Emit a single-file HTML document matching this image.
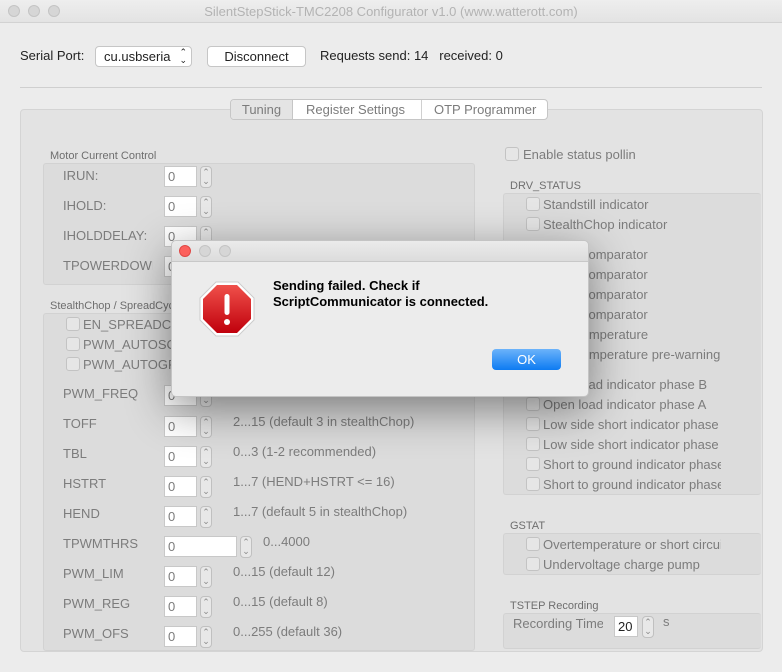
<!DOCTYPE html>
<html><head><meta charset="utf-8"><style>
*{box-sizing:border-box;margin:0;padding:0}
body{width:782px;height:672px;background:#ececec;font-family:"Liberation Sans",sans-serif;font-size:13px;color:#222;position:relative;overflow:hidden}
.a{position:absolute;white-space:nowrap}
.g{color:#7c7c7c}
.tl{position:absolute;width:12px;height:12px;border-radius:50%;background:#d6d6d6;border:1px solid #c4c4c4}
.box{position:absolute;background:#dcdcdc;border:1px solid #d2d2d2;border-radius:3px}
.inp{position:absolute;width:33px;height:21px;background:#fff;border:1px solid #c8c8c8;color:#7c7c7c;padding:2px 0 0 3px;font-size:13px}
.st{position:absolute;width:12px;height:22px;border:1px solid #c0c0c0;border-radius:4px;background:#e8e8e8;font-size:9px;color:#888;text-align:center;line-height:9px;padding-top:1px}
.cb{position:absolute;width:14px;height:14px;border:1px solid #c3c3c3;border-radius:3px;background:#e6e6e6}
.lab{position:absolute;font-size:11px;color:#6e6e6e}
</style></head><body>
<div class="a" style="left:0;top:0;width:782px;height:23px;background:linear-gradient(#eeeeee,#e3e3e3);border-bottom:1px solid #d2d2d2"></div>
<div class="tl" style="left:8px;top:5px"></div><div class="tl" style="left:28px;top:5px"></div><div class="tl" style="left:48px;top:5px"></div>
<div class="a" style="left:0;width:782px;top:4px;text-align:center;color:#b3b3b3;font-size:13px">SilentStepStick-TMC2208 Configurator v1.0 (www.watterott.com)</div>
<div class="a" style="left:20px;top:48px">Serial Port:</div>
<div class="a" style="left:95px;top:46px;width:97px;height:21px;background:#fff;border:1px solid #c6c6c6;border-radius:4px;padding:2px 0 0 8px">cu.usbseria<span style="position:absolute;right:4px;top:1px;font-size:9px;line-height:8px">⌃<br>⌄</span></div>
<div class="a" style="left:207px;top:46px;width:99px;height:21px;background:#fff;border:1px solid #c6c6c6;border-radius:4px;text-align:center;padding-top:2px">Disconnect</div>
<div class="a" style="left:320px;top:48px">Requests send: 14&nbsp;&nbsp;&nbsp;received: 0</div>
<div class="a" style="left:20px;top:87px;width:742px;height:1px;background:#cfcfcf"></div>
<div class="a" style="left:20px;top:109px;width:743px;height:543px;background:#e3e3e3;border:1px solid #d4d4d4;border-radius:4px"></div>
<div class="a" style="left:230px;top:99px;width:318px;height:21px;background:#fff;border:1px solid #c6c6c6;border-radius:4px;color:#7c7c7c"></div>
<div class="a g" style="left:231px;top:100px;width:62px;height:19px;background:#e4e4e4;border-right:1px solid #c6c6c6;border-radius:3px 0 0 3px;text-align:center;padding-top:2px">Tuning</div>
<div class="a g" style="left:306px;top:102px">Register Settings</div>
<div class="a" style="left:421px;top:100px;width:1px;height:19px;background:#d0d0d0"></div>
<div class="a g" style="left:434px;top:102px">OTP Programmer</div>
<div class="lab" style="left:50px;top:150px">Motor Current Control</div>
<div class="box" style="left:43px;top:163px;width:432px;height:122px"></div>
<div class="a g" style="left:63px;top:168px">IRUN:</div><div class="inp" style="left:164px;top:166px">0</div><div class="st" style="left:200px;top:166px">⌃<br>⌄</div>
<div class="a g" style="left:63px;top:198px">IHOLD:</div><div class="inp" style="left:164px;top:196px">0</div><div class="st" style="left:200px;top:196px">⌃<br>⌄</div>
<div class="a g" style="left:63px;top:228px">IHOLDDELAY:</div><div class="inp" style="left:164px;top:226px">0</div><div class="st" style="left:200px;top:226px">⌃<br>⌄</div>
<div class="a g" style="left:63px;top:258px;width:90px;overflow:hidden">TPOWERDOWN</div><div class="inp" style="left:164px;top:256px">0</div>
<div class="lab" style="left:50px;top:300px">StealthChop / SpreadCycle</div>
<div class="box" style="left:43px;top:313px;width:432px;height:338px"></div>
<div class="cb" style="left:66px;top:317px"></div><div class="a g" style="left:83px;top:317px">EN_SPREADCYCLE</div>
<div class="cb" style="left:66px;top:337px"></div><div class="a g" style="left:83px;top:337px">PWM_AUTOSCALE</div>
<div class="cb" style="left:66px;top:357px"></div><div class="a g" style="left:83px;top:357px">PWM_AUTOGRAD</div>
<div class="a g" style="left:63px;top:386px">PWM_FREQ</div><div class="inp" style="left:164px;top:385px">0</div><div class="st" style="left:200px;top:385px">⌃<br>⌄</div>
<div class="a g" style="left:63px;top:416px">TOFF</div><div class="inp" style="left:164px;top:416px">0</div><div class="st" style="left:200px;top:416px">⌃<br>⌄</div><div class="a g" style="left:233px;top:414px">2...15 (default 3 in stealthChop)</div>
<div class="a g" style="left:63px;top:446px">TBL</div><div class="inp" style="left:164px;top:446px">0</div><div class="st" style="left:200px;top:446px">⌃<br>⌄</div><div class="a g" style="left:233px;top:444px">0...3 (1-2 recommended)</div>
<div class="a g" style="left:63px;top:476px">HSTRT</div><div class="inp" style="left:164px;top:476px">0</div><div class="st" style="left:200px;top:476px">⌃<br>⌄</div><div class="a g" style="left:233px;top:474px">1...7 (HEND+HSTRT &lt;= 16)</div>
<div class="a g" style="left:63px;top:506px">HEND</div><div class="inp" style="left:164px;top:506px">0</div><div class="st" style="left:200px;top:506px">⌃<br>⌄</div><div class="a g" style="left:233px;top:504px">1...7 (default 5 in stealthChop)</div>
<div class="a g" style="left:63px;top:536px">TPWMTHRS</div><div class="inp" style="left:164px;top:536px;width:73px">0</div><div class="st" style="left:240px;top:536px">⌃<br>⌄</div><div class="a g" style="left:263px;top:534px">0...4000</div>
<div class="a g" style="left:63px;top:566px">PWM_LIM</div><div class="inp" style="left:164px;top:566px">0</div><div class="st" style="left:200px;top:566px">⌃<br>⌄</div><div class="a g" style="left:233px;top:564px">0...15 (default 12)</div>
<div class="a g" style="left:63px;top:596px">PWM_REG</div><div class="inp" style="left:164px;top:596px">0</div><div class="st" style="left:200px;top:596px">⌃<br>⌄</div><div class="a g" style="left:233px;top:594px">0...15 (default 8)</div>
<div class="a g" style="left:63px;top:626px">PWM_OFS</div><div class="inp" style="left:164px;top:626px">0</div><div class="st" style="left:200px;top:626px">⌃<br>⌄</div><div class="a g" style="left:233px;top:624px">0...255 (default 36)</div>
<div class="cb" style="left:505px;top:147px"></div><div class="a g" style="left:523px;top:147px">Enable status pollin</div>
<div class="lab" style="left:510px;top:180px">DRV_STATUS</div>
<div class="box" style="left:503px;top:193px;width:258px;height:302px;border-right:none"></div>
<div class="cb" style="left:526px;top:197px"></div><div class="a g" style="left:543px;top:197px">Standstill indicator</div>
<div class="cb" style="left:526px;top:217px"></div><div class="a g" style="left:543px;top:217px">StealthChop indicator</div>
<div class="a g" style="left:582px;top:247px">comparator</div>
<div class="a g" style="left:582px;top:267px">comparator</div>
<div class="a g" style="left:582px;top:287px">comparator</div>
<div class="a g" style="left:582px;top:307px">comparator</div>
<div class="a g" style="left:578px;top:327px">temperature</div>
<div class="a g" style="left:578px;top:347px">temperature pre-warning</div>
<div class="a g" style="left:543px;top:377px">Open load indicator phase B</div>
<div class="cb" style="left:526px;top:397px"></div><div class="a g" style="left:543px;top:397px">Open load indicator phase A</div>
<div class="cb" style="left:526px;top:417px"></div><div class="a g" style="left:543px;top:417px;width:178px;overflow:hidden">Low side short indicator phase</div>
<div class="cb" style="left:526px;top:437px"></div><div class="a g" style="left:543px;top:437px;width:178px;overflow:hidden">Low side short indicator phase</div>
<div class="cb" style="left:526px;top:457px"></div><div class="a g" style="left:543px;top:457px;width:178px;overflow:hidden">Short to ground indicator phase</div>
<div class="cb" style="left:526px;top:477px"></div><div class="a g" style="left:543px;top:477px;width:178px;overflow:hidden">Short to ground indicator phase</div>
<div class="lab" style="left:510px;top:520px">GSTAT</div>
<div class="box" style="left:503px;top:533px;width:258px;height:42px;border-right:none"></div>
<div class="cb" style="left:526px;top:537px"></div><div class="a g" style="left:543px;top:537px;width:178px;overflow:hidden">Overtemperature or short circuit</div>
<div class="cb" style="left:526px;top:557px"></div><div class="a g" style="left:543px;top:557px">Undervoltage charge pump</div>
<div class="lab" style="left:510px;top:600px">TSTEP Recording</div>
<div class="box" style="left:503px;top:613px;width:258px;height:36px;border-right:none"></div>
<div class="a g" style="left:513px;top:616px;width:90px;overflow:hidden">Recording Time</div>
<div class="inp" style="left:614px;top:616px;width:24px;color:#222">20</div><div class="st" style="left:642px;top:616px">⌃<br>⌄</div>
<div class="a g" style="left:663px;top:614px">s</div>
<div class="a" style="left:171px;top:240px;width:418px;height:157px;background:#ececec;border:1px solid #c4c4c4;border-radius:5px;box-shadow:0 12px 45px rgba(0,0,0,.45)"></div>
<div class="a" style="left:172px;top:241px;width:416px;height:21px;background:linear-gradient(#ebebeb,#dcdcdc);border-bottom:1px solid #c8c8c8;border-radius:5px 5px 0 0"></div>
<div class="tl" style="left:179px;top:245px;background:#fc605c;border-color:#df4744"></div>
<div class="tl" style="left:199px;top:245px"></div><div class="tl" style="left:219px;top:245px"></div>
<svg class="a" style="left:199px;top:281px" width="56" height="56" viewBox="0 0 56 56"><defs><linearGradient id="r" x1="0" y1="0" x2="0" y2="1"><stop offset="0" stop-color="#f0504a"/><stop offset="1" stop-color="#c0000c"/></linearGradient></defs><polygon points="17,1 39,1 55,17 55,39 39,55 17,55 1,39 1,17" fill="#fff" stroke="#ccc"/><polygon points="18,4 38,4 52,18 52,38 38,52 18,52 4,38 4,18" fill="url(#r)"/><rect x="25.5" y="13" width="5" height="21" rx="2.5" fill="#fff"/><circle cx="28" cy="41" r="3" fill="#fff"/></svg>
<div class="a" style="left:273px;top:278px;font-weight:bold;color:#000;line-height:16px">Sending failed. Check if<br>ScriptCommunicator is connected.</div>
<div class="a" style="left:492px;top:349px;width:69px;height:21px;border-radius:4px;background:linear-gradient(#6cb3fa,#0d7bf2);color:#fff;text-align:center;padding-top:3px">OK</div>
</body></html>
